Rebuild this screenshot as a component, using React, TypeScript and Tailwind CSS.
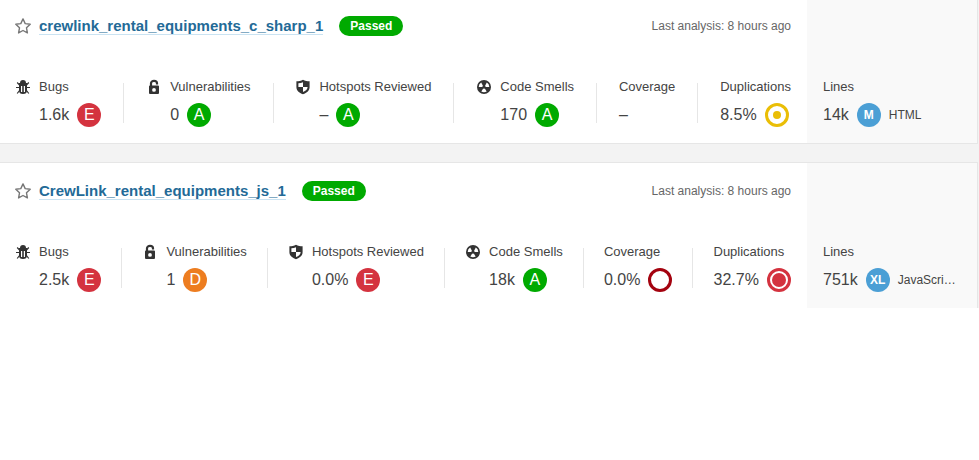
import { Fragment, type ReactNode } from "react";

function StarIcon() {
  return (
    <svg className="size-4" viewBox="0 0 16 16" fill="none" stroke="#777" strokeWidth="1.4" strokeLinejoin="round" aria-hidden="true">
      <path d="M8 .9l2.2 4.7 5 .7-3.7 3.5.9 5.1L8 12.5l-4.4 2.4.9-5.1L.8 6.300l5-.7z" />
    </svg>
  );
}

function BugIcon() {
  return (
    <svg className="size-4" viewBox="0 0 16 16" fill="#333" aria-hidden="true">
      <path d="M5 4a3 3 0 0 1 6 0z" />
      <path fillRule="evenodd" d="M4 4h8v7.500a4 3.500 0 0 1-8 0zM6 7v6h1.200V7zM8.800 7v6H10V7z" />
      <path d="M4.500 6L2.200 3.500M11.500 6l2.300-2.500M1 8.500h3.500M15 8.500h-3.500M4.500 11.500l-2.300 3M11.500 11.500l2.300 3" stroke="#333" strokeWidth="1.200" />
    </svg>
  );
}

function LockIcon() {
  return (
    <svg className="size-4" viewBox="0 0 16 16" aria-hidden="true">
      <path d="M5 7V4.300a3 2.500 0 0 1 6 0V5.500" fill="none" stroke="#333" strokeWidth="2.200" />
      <path fillRule="evenodd" fill="#333" d="M4 6.500h8a1 1 0 0 1 1 1V14a1 1 0 0 1-1 1H4a1 1 0 0 1-1-1V7.500a1 1 0 0 1 1-1zM8 9a1.900 1.900 0 1 0 0 3.800A1.900 1.900 0 0 0 8 9z" />
    </svg>
  );
}

function ShieldIcon() {
  return (
    <svg className="size-4" viewBox="0 0 16 16" aria-hidden="true">
      <path fill="#333" d="M8 .8c2 1 4.400 1.500 6.600 1.500v5.700c0 3.500-2.600 5.800-6.600 7.200-4-1.400-6.600-3.700-6.600-7.200V2.300C3.600 2.300 6 1.800 8 .8z" />
      <path fill="#fff" d="M8 3.200V8h4.600c0 2.300-1.800 4-4.600 5V8H3.400V4.300C5 4.200 6.700 3.800 8 3.200z" />
    </svg>
  );
}

function SmellIcon() {
  return (
    <svg className="size-4" viewBox="0 0 16 16" aria-hidden="true">
      <circle cx="8" cy="8" r="7" fill="#333" />
      <g fill="#fff">
        <path d="M6.900 6.800L5.200 3.500A5.300 5.300 0 0 0 2.700 7.900h3.700a1.800 1.800 0 0 1 .5-1.100z" />
        <path d="M9.100 6.800l1.700-3.300a5.300 5.300 0 0 1 2.500 4.400H9.600a1.800 1.800 0 0 0-.5-1.100z" />
        <path d="M7.200 9.600l-1.900 2.900a5.300 5.300 0 0 0 5.400 0L8.800 9.600a1.800 1.800 0 0 1-1.600 0z" />
      </g>
    </svg>
  );
}

const ratingColors = {
  A: "bg-[#00aa00]",
  D: "bg-[#ed7d20]",
  E: "bg-[#d4333f]",
};

function Rating({ grade }: { grade: keyof typeof ratingColors }) {
  return (
    <span className={`flex size-6 items-center justify-center rounded-full text-base text-white ${ratingColors[grade]}`}>
      {grade}
    </span>
  );
}

function Ring({ color, dot }: { color: string; dot: number }) {
  return (
    <svg className="size-6" viewBox="0 0 24 24" aria-hidden="true">
      <circle cx="12" cy="12" r="10.5" fill="#fff" stroke={color} strokeWidth="3" />
      <circle cx="12" cy="12" r={dot} fill={color} />
    </svg>
  );
}

function Size({ children }: { children: string }) {
  return (
    <span className="flex size-6 shrink-0 items-center justify-center rounded-full bg-[#4b9fd5] text-xs font-bold text-white">
      {children}
    </span>
  );
}

type MeasureProps = { icon?: ReactNode; label: string; value: string; mark?: ReactNode };

function Measure({ icon, label, value, mark }: MeasureProps) {
  return (
    <div className="flex gap-2">
      {icon}
      <div>
        <div className="text-[13px] leading-4">{label}</div>
        <div className="mt-2 flex h-6 items-center gap-2 text-base">
          <span>{value}</span>
          {mark}
        </div>
      </div>
    </div>
  );
}

type Project = {
  name: string;
  measures: MeasureProps[];
  lines: string;
  size: string;
  language: string;
};

const projects: Project[] = [
  {
    name: "crewlink_rental_equipments_c_sharp_1",
    measures: [
      { icon: <BugIcon />, label: "Bugs", value: "1.6k", mark: <Rating grade="E" /> },
      { icon: <LockIcon />, label: "Vulnerabilities", value: "0", mark: <Rating grade="A" /> },
      { icon: <ShieldIcon />, label: "Hotspots Reviewed", value: "–", mark: <Rating grade="A" /> },
      { icon: <SmellIcon />, label: "Code Smells", value: "170", mark: <Rating grade="A" /> },
      { label: "Coverage", value: "–" },
      { label: "Duplications", value: "8.5%", mark: <Ring color="#eabe06" dot={4} /> },
    ],
    lines: "14k",
    size: "M",
    language: "HTML",
  },
  {
    name: "CrewLink_rental_equipments_js_1",
    measures: [
      { icon: <BugIcon />, label: "Bugs", value: "2.5k", mark: <Rating grade="E" /> },
      { icon: <LockIcon />, label: "Vulnerabilities", value: "1", mark: <Rating grade="D" /> },
      { icon: <ShieldIcon />, label: "Hotspots Reviewed", value: "0.0%", mark: <Rating grade="E" /> },
      { icon: <SmellIcon />, label: "Code Smells", value: "18k", mark: <Rating grade="A" /> },
      { label: "Coverage", value: "0.0%", mark: <Ring color="#a4030f" dot={0} /> },
      { label: "Duplications", value: "32.7%", mark: <Ring color="#d4333f" dot={7} /> },
    ],
    lines: "751k",
    size: "XL",
    language: "JavaScri…",
  },
];

function ProjectCard({ project }: { project: Project }) {
  return (
    <article className="mr-px flex border-y border-r border-[#e6e6e6] bg-white">
      <div className="min-w-0 flex-1 pt-[18px] pr-4 pb-4 pl-[15px]">
        <header className="flex h-5 items-center">
          <button type="button" aria-label={`Add ${project.name} to favorites`} className="mr-2">
            <StarIcon />
          </button>
          <h2 className="text-[15px] leading-4 font-bold">
            <a href="#" className="block border-b border-[#cae3f2] text-[#236a97]">{project.name}</a>
          </h2>
          <span className="ml-4 flex h-5 items-center rounded-full bg-[#00aa00] px-[11px] text-xs font-bold text-white">
            Passed
          </span>
          <span className="ml-auto text-xs text-[#666]">Last analysis: 8 hours ago</span>
        </header>
        <div className="mt-[43px] flex justify-between">
          {project.measures.map((measure, index) => (
            <Fragment key={measure.label}>
              {index > 0 && <div className="mt-1 h-10 w-px bg-[#e6e6e6]" />}
              <Measure {...measure} />
            </Fragment>
          ))}
        </div>
      </div>
      <aside className="flex w-[170px] flex-col justify-end bg-[#f9f9f9] p-4">
        <div className="text-[13px] leading-4">Lines</div>
        <div className="mt-2 flex h-6 items-center gap-2 text-base">
          <span>{project.lines}</span>
          <Size>{project.size}</Size>
          <span className="text-xs">{project.language}</span>
        </div>
      </aside>
    </article>
  );
}

export default function App() {
  return (
    <main className="h-[308px] overflow-hidden bg-[#f3f3f3] font-['Liberation_Sans',Arial,sans-serif] text-[#444]">
      <div className="-mt-[3px] flex flex-col gap-[18px]">
        {projects.map((project) => (
          <ProjectCard key={project.name} project={project} />
        ))}
      </div>
    </main>
  );
}
